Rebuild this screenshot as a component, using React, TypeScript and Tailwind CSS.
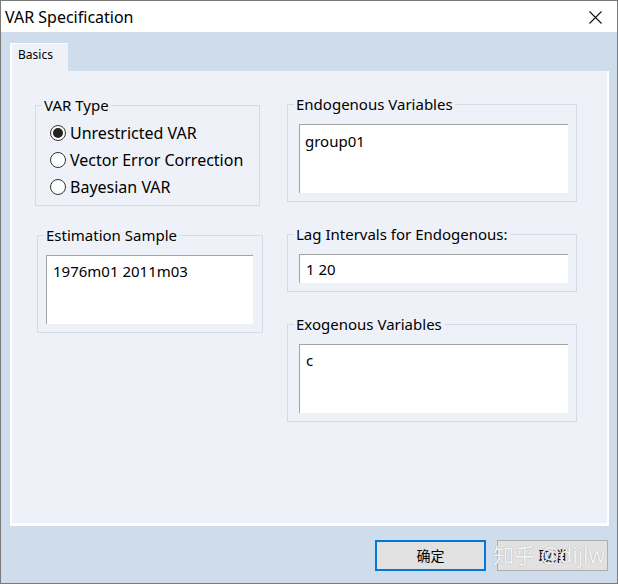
import React from 'react';

const font = "font-['Noto_Sans','Noto_Sans_CJK_SC',sans-serif]";

type GroupProps = { label: string; className?: string; children?: React.ReactNode };

const Group: React.FC<GroupProps> = ({ label, className = '', children }) => (
  <div className={`relative border border-[#d6dce4] ${className}`}>
    <span className="absolute -top-[11px] left-[6px] bg-[#eef2f8] px-[2px] text-[15px] leading-[20px] text-black">
      {label}
    </span>
    {children}
  </div>
);

const TextBox: React.FC<{ value: string; className?: string }> = ({ value, className = '' }) => (
  <div className={`border-l border-t border-[#a3a3a3] bg-white pl-[5px] pt-[3px] text-[15px] leading-[20px] text-black ${className}`}>
    {value}
  </div>
);

const Radio: React.FC<{ label: string; checked?: boolean }> = ({ label, checked }) => (
  <div className="flex h-[27px] items-center gap-[4px]">
    <span className="flex h-[16px] w-[16px] items-center justify-center rounded-full border border-[#333] bg-white">
      {checked && <span className="h-[10px] w-[10px] rounded-full bg-[#222]" />}
    </span>
    <span className="text-[16px] leading-[20px] text-black">{label}</span>
  </div>
);

const App: React.FC = () => {
  return (
    <div className={`flex h-[584px] w-[618px] flex-col border border-[#7a7a7a] bg-[#cfdcec] ${font}`}>
      <div className="flex h-[31px] items-center justify-between bg-white pl-[4px] pr-[15px]">
        <span className="text-[16px] leading-[20px] text-black">VAR Specification</span>
        <svg width="13" height="13" viewBox="0 0 13 13" className="mt-[1px]">
          <path d="M0.5 0.5 L12.5 12.5 M12.5 0.5 L0.5 12.5" stroke="#111" strokeWidth="1.1" />
        </svg>
      </div>

      <div className="flex flex-col pl-[9px] pr-[8px] pt-[11px]">
        <div className="flex">
          <div className="flex h-[28px] w-[58px] items-start border-l-2 border-t border-white bg-[#eef2f8] pl-[6px] pt-[3px] text-[12px] leading-[16px] text-black">
            Basics
          </div>
        </div>
        <div className="flex h-[455px] w-[599px] border-b-[3px] border-l-2 border-r-2 border-white bg-[#eef2f8]">
          <div className="flex w-[253px] flex-col pl-[23px] pt-[34px]">
            <Group label="VAR Type" className="h-[101px] w-[225px] pl-[14px] pt-[13px]">
              <Radio label="Unrestricted VAR" checked />
              <Radio label="Vector Error Correction" />
              <Radio label="Bayesian VAR" />
            </Group>
            <Group label="Estimation Sample" className="ml-[2px] mt-[29px] h-[98px] w-[226px] pb-[8px] pl-[8px] pr-[9px] pt-[19px]">
              <TextBox value="1976m01 2011m03" className="h-full pl-[6px] pt-[5px]" />
            </Group>
          </div>
          <div className="flex flex-col pl-[22px] pt-[33px]">
            <Group label="Endogenous Variables" className="h-[98px] w-[290px] pb-[8px] pl-[11px] pr-[8px] pt-[19px]">
              <TextBox value="group01" className="h-full pt-[6px]" />
            </Group>
            <Group label="Lag Intervals for Endogenous:" className="mt-[32px] h-[58px] w-[290px] pb-[8px] pl-[11px] pr-[8px] pt-[19px]">
              <TextBox value="1 20" className="h-full pl-[6px] pt-[4px]" />
            </Group>
            <Group label="Exogenous Variables" className="mt-[32px] h-[98px] w-[290px] pb-[8px] pl-[11px] pr-[8px] pt-[19px]">
              <TextBox value="c" className="h-full pl-[6px] pt-[5px]" />
            </Group>
          </div>
        </div>
      </div>

      <div className="relative flex justify-end gap-[11px] pr-[9px] pt-[14px]">
        <button className="h-[31px] w-[111px] border-2 border-[#0078d7] bg-[#e1e1e1] text-[14px] leading-[18px] text-black">
          确定
        </button>
        <button className="h-[31px] w-[111px] border border-[#adadad] bg-[#e1e1e1] text-[14px] leading-[18px] text-black">
          取消
        </button>
        <span className="pointer-events-none absolute right-[12px] top-[16px] text-[21px] leading-[26px] text-white/90 [text-shadow:0_0_1px_#8a8a8a]">
          知乎 @dijlw
        </span>
      </div>
    </div>
  );
};

export default App;
